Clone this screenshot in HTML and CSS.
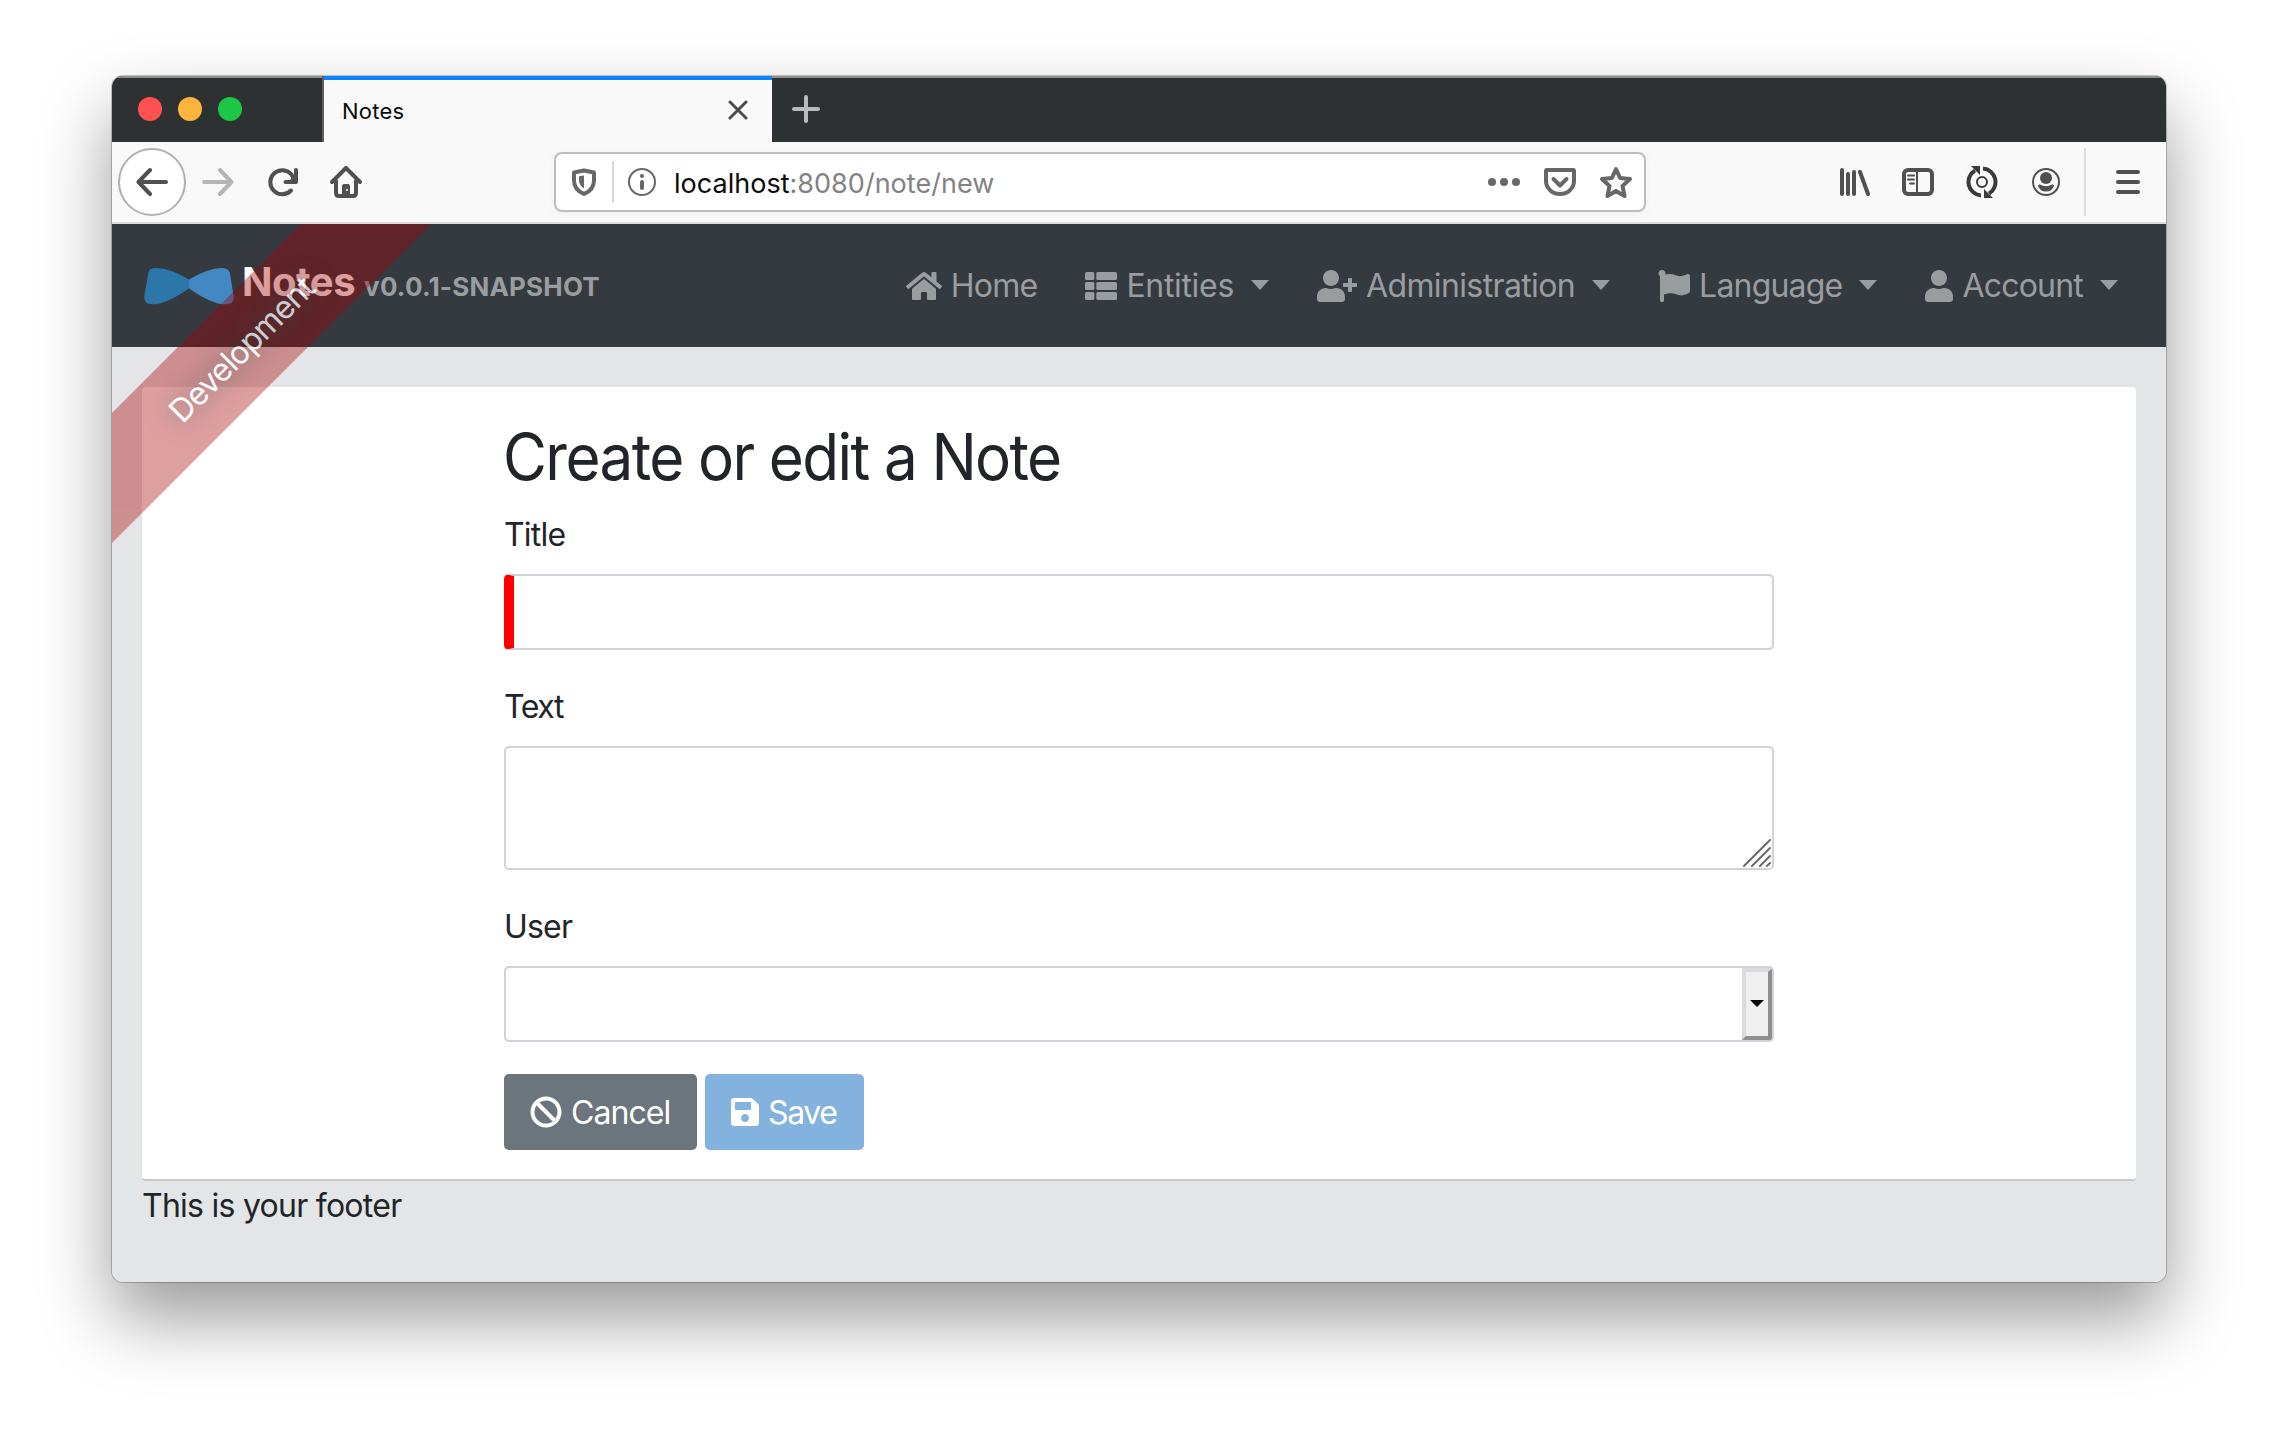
FILE: index.html
```html
<!DOCTYPE html>
<html lang="en">
<head>
<meta charset="utf-8">
<title>Notes</title>
<link rel="stylesheet" href="styles.css">
</head>
<body>
<div class="window">
  <div class="tabbar">
    <div class="lights"><i class="light red"></i><i class="light amber"></i><i class="light green"></i></div>
    <div class="tab">
      <span class="tab-title">Notes</span>
      <svg class="tab-close" viewBox="0 0 20 20"><path d="M2 2l16 16M18 2L2 18"/></svg>
    </div>
    <svg class="tab-new" viewBox="0 0 28 28"><path d="M14 2v24M2 14h24"/></svg>
  </div>
  <div class="toolbar">
    <div class="back"><svg class="tool" viewBox="0 0 32 32"><path d="M30 16H3M14 4L2.500 16 14 28"/></svg></div>
    <svg class="tool forward" viewBox="0 0 32 32"><path d="M2 16h27M18 4l11.500 12L18 28"/></svg>
    <svg class="tool" viewBox="0 0 32 32"><path d="M25 24.500A12 12 0 1 1 25.500 8.500L28 13"/><path d="M30 4v12H19.500"/><path d="M30 8v8h-8z" class="fill"/></svg>
    <svg class="tool" viewBox="0 0 32 32"><path d="M2 16L16 2l14 14"/><path d="M6 15v12q0 3 3 3h14q3 0 3-3V15" /><path d="M12 30V20q0-2 2-2h4q2 0 2 2v10z" class="fill"/><circle cx="17" cy="24" r="1" class="hole"/></svg>
    <div class="urlbar">
      <svg class="tool" viewBox="0 0 32 32"><path d="M16 4.500L26 6.500v8c0 7-4 11-10 13.500-6-2.500-10-6.500-10-13.500v-8z"/><path d="M16 9.500v13c-3-2-5-4.500-5-8v-4.200z" class="fill"/></svg>
      <i class="url-divider"></i>
      <svg class="tool thin" viewBox="0 0 32 32"><circle cx="16" cy="16" r="13"/><path d="M16 16v6" class="stem"/><circle cx="16" cy="10" r="2.100" class="fill"/></svg>
      <span class="url">localhost<span class="url-rest">:8080/note/new</span></span>
      <svg class="tool" viewBox="0 0 32 32"><g class="fill"><circle cx="4" cy="16" r="4"/><circle cx="16" cy="16" r="4"/><circle cx="28" cy="16" r="4"/></g></svg>
      <svg class="tool" viewBox="0 0 32 32"><path d="M3 4h26q1 0 1 1v10a14 13 0 0 1-28 0V5q0-1 1-1z"/><path d="M9.500 13l6.500 6.500 6.500-6.500"/></svg>
      <svg class="tool" viewBox="0 0 32 32"><path d="M16 3l4 9 10 1-7.500 7L24.500 30 16 25l-8.500 5 2-10L2 13l10-1z"/></svg>
    </div>
    <div class="tools">
      <svg class="tool" viewBox="0 0 32 32"><path d="M4 4v24M10 8v20M16 6v22M22 6l8 22"/></svg>
      <svg class="tool" viewBox="0 0 32 32"><rect x="2" y="4" width="28" height="24" rx="4"/><path d="M15 4v24M6 9.500h6M6 13.500h6M8 17.500h4" class="hair"/></svg>
      <svg class="tool dark" viewBox="0 0 32 32"><path d="M17 2.500A13.500 13.500 0 0 1 23 27.500M15 29.500A13.500 13.500 0 0 1 9 4.500"/><path d="M5 0h9v9zM18 32h9l-9-9z" class="fill"/><circle cx="16" cy="16" r="5" class="hair"/></svg>
      <svg class="tool thin" viewBox="0 0 32 32"><circle cx="16" cy="16" r="13"/><circle cx="16" cy="12" r="6" class="fill"/><path d="M8 20q0-2 2-1.500 6 3.500 12 0 2-.5 2 1.500-2 5.500-8 5.500T8 20z" class="fill"/></svg>
    </div>
    <i class="tool-divider"></i>
    <svg class="tool" viewBox="0 0 32 32"><path d="M6 6h20M6 16h20M6 26h20"/></svg>
  </div>
  <div class="page">
    <nav class="navbar">
      <a class="brand">
        <svg class="logo" viewBox="0 0 258 110" preserveAspectRatio="none"><path fill="#2c77a9" d="M12 16Q15 0 36 0 72 0 129 34V60Q66 108 22 108-1 107 1 84z"/><path fill="#4288c3" d="M246 14Q243 0 222 0 186 0 129 34V60Q192 108 236 108 259 107 257 84z"/></svg>
        <span class="brand-name">Notes</span><span class="version">v0.0.1-SNAPSHOT</span>
      </a>
      <ul class="nav">
        <li><svg class="w36" viewBox="0 0 576 512"><path d="M280.370 148.260L96 300.110V464a16 16 0 0 0 16 16l112.060-.29a16 16 0 0 0 15.920-16V368a16 16 0 0 1 16-16h64a16 16 0 0 1 16 16v95.640a16 16 0 0 0 16 16.050L464 480a16 16 0 0 0 16-16V300L295.670 148.260a12.190 12.190 0 0 0-15.300 0zM571.600 251.470L488 182.560V44.050a12 12 0 0 0-12-12h-56a12 12 0 0 0-12 12v72.610L318.470 43a48 48 0 0 0-61 0L4.340 251.470a12 12 0 0 0-1.600 16.900l25.500 31A12 12 0 0 0 45.150 301l235.220-193.740a12.190 12.190 0 0 1 15.300 0L530.900 301a12 12 0 0 0 16.900-1.600l25.500-31a12 12 0 0 0-1.700-16.930z"/></svg><span class="t-home">Home</span></li>
        <li><svg class="w32" viewBox="0 0 512 512"><rect y="32" width="149" height="128" rx="24"/><rect y="192" width="149" height="128" rx="24"/><rect y="352" width="149" height="128" rx="24"/><rect x="181" y="32" width="331" height="128" rx="24"/><rect x="181" y="192" width="331" height="128" rx="24"/><rect x="181" y="352" width="331" height="128" rx="24"/></svg><span class="t-entities">Entities</span><i class="caret"></i></li>
        <li><svg class="w40" viewBox="0 0 640 512"><path d="M624 208h-64v-64c0-8.800-7.200-16-16-16h-32c-8.800 0-16 7.200-16 16v64h-64c-8.800 0-16 7.200-16 16v32c0 8.800 7.200 16 16 16h64v64c0 8.800 7.200 16 16 16h32c8.800 0 16-7.200 16-16v-64h64c8.800 0 16-7.200 16-16v-32c0-8.800-7.200-16-16-16zM224 256c70.700 0 128-57.300 128-128S294.700 0 224 0 96 57.300 96 128s57.300 128 128 128zm89.600 32h-16.700c-22.200 10.200-46.900 16-72.900 16s-50.600-5.800-72.900-16h-16.700C60.200 288 0 348.200 0 422.400V464c0 26.500 21.500 48 48 48h352c26.500 0 48-21.500 48-48v-41.600c0-74.200-60.200-134.400-134.400-134.400z"/></svg><span class="t-admin">Administration</span><i class="caret"></i></li>
        <li><svg class="w32" viewBox="0 0 512 512"><path d="M349.565 98.783C295.978 98.783 251.721 64 184.348 64c-24.955 0-47.309 4.384-68.045 12.013a55.947 55.947 0 0 0 3.586-23.562C118.117 24.015 94.806 1.206 66.338.048 34.345-1.254 8 24.296 8 56c0 19.026 9.497 35.825 24 45.945V488c0 13.255 10.745 24 24 24h16c13.255 0 24-10.745 24-24v-94.400c28.311-12.064 63.582-22.122 114.435-22.122 53.588 0 97.844 34.783 165.217 34.783 48.169 0 86.667-16.294 122.505-40.858C506.840 359.452 512 349.571 512 339.045v-243.100c0-23.393-24.269-38.870-45.485-29.016-34.338 15.948-76.454 31.854-116.950 31.854z"/></svg><span class="t-language">Language</span><i class="caret"></i></li>
        <li><svg class="w28" viewBox="0 0 448 512"><path d="M224 256c70.700 0 128-57.300 128-128S294.700 0 224 0 96 57.300 96 128s57.300 128 128 128zm89.600 32h-16.700c-22.200 10.200-46.900 16-72.900 16s-50.600-5.800-72.900-16h-16.700C60.200 288 0 348.200 0 422.400V464c0 26.500 21.500 48 48 48h352c26.500 0 48-21.500 48-48v-41.600c0-74.200-60.200-134.400-134.400-134.400z"/></svg><span class="t-account">Account</span><i class="caret"></i></li>
      </ul>
    </nav>
    <main class="card">
      <form class="form">
        <h2><span>Create or edit a Note</span></h2>
        <div class="group"><label for="title" class="t-title">Title</label><input id="title" class="control required" type="text"></div>
        <div class="group"><label for="text" class="t-text">Text</label>
          <div class="area"><textarea id="text" class="control tall"></textarea><svg class="grip" viewBox="0 0 28 28"><path d="M1 27L27 1M9 27L27 9M17 27L27 17M24 27l3-3"/></svg></div>
        </div>
        <div class="group"><span class="label t-user">User</span><div class="control select"><span class="drop"><i></i></span></div></div>
        <div class="actions">
          <button type="button" class="btn cancel"><svg class="w32" viewBox="0 0 512 512"><path d="M256 8C119.034 8 8 119.033 8 256s111.034 248 248 248 248-111.034 248-248S392.967 8 256 8zm130.108 117.892c65.448 65.448 70 165.481 20.677 235.637L150.470 105.216c70.204-49.356 170.226-44.735 235.638 20.676zM125.892 386.108c-65.448-65.448-70-165.481-20.677-235.637L361.530 406.784c-70.203 49.356-170.226 44.736-235.638-20.676z"/></svg><span class="t-cancel">Cancel</span></button>
          <button type="button" class="btn save"><svg class="w28" viewBox="0 0 448 512"><path d="M433.941 129.941l-83.882-83.882A48 48 0 0 0 316.118 32H48C21.490 32 0 53.490 0 80v352c0 26.510 21.490 48 48 48h352c26.510 0 48-21.490 48-48V163.882a48 48 0 0 0-14.059-33.941zM224 416c-35.346 0-64-28.654-64-64 0-35.346 28.654-64 64-64s64 28.654 64 64c0 35.346-28.654 64-64 64zm96-304.520V212c0 6.627-5.373 12-12 12H76c-6.627 0-12-5.373-12-12V108c0-6.627 5.373-12 12-12h228.520c3.183 0 6.235 1.264 8.485 3.515l3.480 3.480A11.996 11.996 0 0 1 320 111.480z"/></svg><span class="t-save">Save</span></button>
        </div>
      </form>
    </main>
    <footer class="footer">This is your footer</footer>
    <div class="ribbon">Development</div>
  </div>
</div>
</body>
</html>
```
FILE: styles.css
```css
* { box-sizing: border-box; }

body {
  margin: 0;
  padding: 76px 112px 0;
  height: 1430px;
  overflow: hidden;
  background: #fff;
  font-family: Inter, "Liberation Sans", sans-serif;
  font-size: 32px;
  color: #212529;
}

svg { display: block; flex: none; }

.window {
  height: 1206px;
  display: flex;
  flex-direction: column;
  border-radius: 11px;
  overflow: hidden;
  background: #e4e5e6;
  box-shadow: 0 0 0 1px rgba(0, 0, 0, .22), 0 36px 72px rgba(0, 0, 0, .4);
}

/* Tab strip */
.tabbar {
  flex: none;
  height: 66px;
  display: flex;
  background: #2e3132;
  box-shadow: inset 0 2px #8e9192;
}
.lights {
  width: 212px;
  padding: 21px 0 0 26px;
  display: flex;
  gap: 16px;
  border-right: 2px solid #5c5e5e;
}
.light { width: 24px; height: 24px; border-radius: 50%; }
.red { background: #ff5052; }
.amber { background: #ffb43d; }
.green { background: #1bc744; }
.tab {
  width: 448px;
  padding: 0 24px 0 18px;
  display: flex;
  align-items: center;
  justify-content: space-between;
  background: #f9f9fa;
  border-top: 4px solid #0a84ff;
}
.tab-title { font-size: 22px; letter-spacing: .26px; color: #0c0c0d; }
.tab-close { width: 20px; height: 20px; margin-top: -3px; fill: none; stroke: #4c4c4d; stroke-width: 3; stroke-linecap: round; }
.tab-new { width: 28px; height: 28px; margin: 19px 0 0 20px; fill: none; stroke: #b9babb; stroke-width: 4; stroke-linecap: round; }

/* Navigation toolbar */
.toolbar {
  flex: none;
  height: 82px;
  padding: 0 22px 0 6px;
  display: flex;
  align-items: center;
  gap: 32px;
  background: #f9f9fa;
  border-bottom: 2px solid #dcdfdf;
}
.tool { width: 32px; height: 32px; fill: none; stroke: #505051; stroke-width: 4; stroke-linecap: round; stroke-linejoin: round; }
.tool .fill { fill: #505051; stroke: none; }
.tool .hole { fill: #fff; stroke: none; }
.tool .hair { stroke-width: 2; }
.tool .stem { stroke-width: 4; }
.thin { stroke-width: 2; }
.dark { stroke: #3a3a3b; stroke-linecap: butt; }
.dark .fill { fill: #3a3a3b; }
.forward { stroke: #b5b5b6; }
.back {
  width: 68px;
  height: 68px;
  margin-right: -16px;
  display: grid;
  place-items: center;
  background: #fff;
  border: 2px solid #b1b1b1;
  border-radius: 50%;
}
.urlbar {
  flex: none;
  width: 1092px;
  height: 60px;
  margin-left: 160px;
  padding: 0 12px;
  display: flex;
  align-items: center;
  gap: 12px;
  background: #fff;
  border: 2px solid #bdbdbe;
  border-radius: 8px;
  box-shadow: 0 2px 8px rgba(0, 0, 0, .05);
}
.urlbar .tool { stroke: #676768; }
.urlbar .fill { fill: #676768; }
.urlbar .tool ~ .tool ~ .tool + .tool { margin-left: 12px; }
.url-divider { width: 2px; height: 42px; background: #d7d7d8; }
.url { flex: 1; margin-left: 4px; padding-top: 2px; font-size: 27px; letter-spacing: .02px; color: #0c0c0d; }
.url-rest { color: #828283; }
.tools { margin-left: auto; display: flex; gap: 32px; }
.tool-divider { width: 2px; height: 68px; margin: 0 -6px 0 -10px; background: #dededf; }

/* Application page */
.page { position: relative; flex: 1; overflow: hidden; background: #e4e5e6; }
.navbar {
  height: 123px;
  padding: 0 48px 0 32px;
  display: flex;
  align-items: center;
  justify-content: space-between;
  background: #353a41;
  color: #9a9da0;
}
.brand { display: flex; align-items: center; font-weight: 700; }
.logo { width: 90px; height: 37px; margin-top: 2px; }
.brand-name { margin: -8px 0 0 8px; font-size: 40px; line-height: 60px; letter-spacing: -.48px; color: #fff; }
.version { margin: 2px 0 0 9px; font-size: 26px; line-height: 60px; letter-spacing: .19px; }
.nav { display: flex; gap: 48px; margin: 0; padding: 0; list-style: none; }
.nav li { display: flex; align-items: center; }
.nav svg, .btn svg { height: 32px; margin-right: 9px; fill: currentColor; }
.w28 { width: 28px; }
.w32 { width: 32px; }
.w36 { width: 36px; }
.w40 { width: 40px; }
.caret { margin: -2px 0 0 17px; border: 9px solid transparent; border-top: 10px solid; border-bottom: 0; }

.card {
  height: 794px;
  margin: 40px 30px 0;
  padding-top: 31px;
  background: #fff;
  border-radius: 4px;
  border-bottom: 2px solid #c7c8c9;
}
.form { width: 1270px; margin: 0 auto; }
h2 { margin: 0 0 16px; font-size: 64px; line-height: 77px; font-weight: 400; }
h2 span { display: inline-block; transform: scaleX(.94); transform-origin: 0 0; margin-left: -1px; letter-spacing: -1.7px; white-space: nowrap; }
.group { margin-bottom: 32px; }
label, .label { display: block; margin-bottom: 15px; line-height: 48px; }
.group + .group label, .group + .group .label { padding-top: 1px; }
.control {
  display: block;
  width: 100%;
  height: 76px;
  margin: 0;
  background: #fff;
  border: 2px solid #ced3d9;
  border-radius: 5px;
}
.required { border-left: 10px solid #f00; }
.area { position: relative; }
.tall { height: 124px; resize: none; }
.grip { position: absolute; right: 3px; bottom: 3px; width: 28px; height: 28px; fill: none; stroke: #6a6a6a; stroke-width: 2; stroke-linecap: round; }
.select { display: flex; justify-content: flex-end; overflow: hidden; }
.drop {
  width: 30px;
  display: grid;
  place-items: center;
  background: #efefef;
  border: 4px solid;
  border-color: #dadada #8f8f8f #8f8f8f #dadada;
}
.drop i { margin-top: -2px; border: 7px solid transparent; border-top-color: #000; border-bottom: 0; }
.actions { display: flex; gap: 8px; }
.btn {
  height: 76px;
  padding: 0 26px;
  display: flex;
  align-items: center;
  border: 0;
  border-radius: 5px;
  font: inherit;
  color: #fff;
}
.cancel { width: 193px; background: #6c757d; }
.save { width: 159px; background: #83b2de; }
.footer { padding: 1px 30px; line-height: 48px; letter-spacing: -.74px; }

.t-home { letter-spacing: -.77px; }
.t-entities { letter-spacing: -.32px; }
.t-admin { letter-spacing: -.62px; }
.t-language { letter-spacing: -.8px; }
.t-account { letter-spacing: -.8px; }
.t-title { letter-spacing: -.8px; }
.t-text { letter-spacing: -1.4px; }
.t-user { letter-spacing: -.79px; }
.t-cancel { letter-spacing: -.94px; }
.t-save { letter-spacing: -1.36px; }

/* Corner ribbon laid over the page */
.ribbon {
  position: absolute;
  left: -131px;
  top: 79px;
  width: 520px;
  height: 92px;
  line-height: 93px;
  text-align: center;
  letter-spacing: -.93px;
  color: #fff;
  background: rgba(170, 0, 0, .5);
  text-shadow: 0 0 24px #444;
  opacity: .75;
  transform: rotate(-45deg);
}
```
